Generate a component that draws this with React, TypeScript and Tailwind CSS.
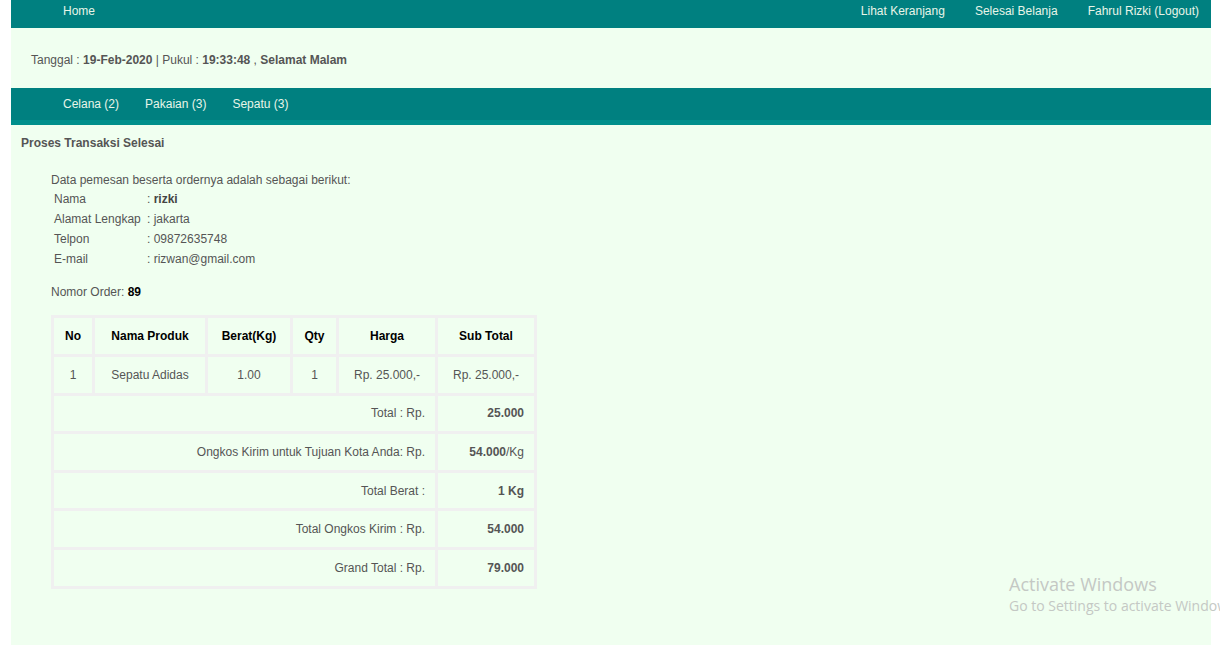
import React from "react";

const produk = [
  { no: 1, nama: "Sepatu Adidas", berat: "1.00", qty: 1, harga: "Rp. 25.000,-", sub: "Rp. 25.000,-" },
];

const ringkasan: { label: string; value: React.ReactNode }[] = [
  { label: "Total : Rp.", value: <b>25.000</b> },
  { label: "Ongkos Kirim untuk Tujuan Kota Anda: Rp.", value: <><b>54.000</b>/Kg</> },
  { label: "Total Berat :", value: <b>1 Kg</b> },
  { label: "Total Ongkos Kirim : Rp.", value: <b>54.000</b> },
  { label: "Grand Total : Rp.", value: <b>79.000</b> },
];

const pemesan = [
  { label: "Nama", value: <b className="text-[#444]">rizki</b> },
  { label: "Alamat Lengkap", value: "jakarta" },
  { label: "Telpon", value: "09872635748" },
  { label: "E-mail", value: "rizwan@gmail.com" },
];

export default function App() {
  return (
    <div className="relative w-[1220px] h-[645px] overflow-hidden bg-white font-['Liberation_Sans',Arial,sans-serif] text-[12px] text-[#555]">
      <div className="ml-[11px] w-[1200px] min-h-[645px] bg-[#f0fff0]">
        {/* top nav */}
        <div className="h-[28px] bg-[#008080] text-[#e8f5e8] flex items-start pt-[4px] leading-[14px]">
          <a className="ml-[52px]">Home</a>
          <div className="ml-auto flex gap-[30px] mr-[12px]">
            <a>Lihat Keranjang</a>
            <a>Selesai Belanja</a>
            <a>Fahrul Rizki (Logout)</a>
          </div>
        </div>

        {/* tanggal */}
        <div className="h-[60px] pl-[20px] pt-[24px] leading-[16px]">
          Tanggal : <b>19-Feb-2020</b> | Pukul : <b>19:33:48</b> , <b>Selamat Malam</b>
        </div>

        {/* kategori */}
        <div className="h-[32px] bg-[#008080] text-[#e8f5e8] flex items-center gap-[26px] pl-[52px]">
          <a>Celana (2)</a>
          <a>Pakaian (3)</a>
          <a>Sepatu (3)</a>
        </div>
        <div className="h-[5px] bg-[#008f8c]" />

        {/* konten */}
        <div className="pl-[10px] pt-[10px] leading-[16px]">
          <h2 className="font-bold text-[#555]">Proses Transaksi Selesai</h2>

          <div className="ml-[30px] mt-[21px]">
            <p>Data pemesan beserta ordernya adalah sebagai berikut:</p>
            <div className="grid grid-cols-[93px_auto] pl-[3px] pt-[1px]">
              {pemesan.map((p) => (
                <React.Fragment key={p.label}>
                  <div className="h-[20px] leading-[20px]">{p.label}</div>
                  <div className="h-[20px] leading-[20px]">: {p.value}</div>
                </React.Fragment>
              ))}
            </div>

            <p className="mt-[15px]">
              Nomor Order: <b className="text-black">89</b>
            </p>

            <table className="mt-[15px] table-fixed w-[486px] border-separate border-spacing-[3px] bg-[#f0f0f0]">
              <thead>
                <tr className="h-[36px] text-black">
                  <th className="w-[38px] bg-[#f0fff0] font-bold">No</th>
                  <th className="w-[110px] bg-[#f0fff0] font-bold">Nama Produk</th>
                  <th className="w-[82px] bg-[#f0fff0] font-bold">Berat(Kg)</th>
                  <th className="w-[43px] bg-[#f0fff0] font-bold">Qty</th>
                  <th className="w-[96px] bg-[#f0fff0] font-bold">Harga</th>
                  <th className="w-[96px] bg-[#f0fff0] font-bold">Sub Total</th>
                </tr>
              </thead>
              <tbody>
                {produk.map((r) => (
                  <tr key={r.no} className="h-[35.6px] text-center">
                    <td className="bg-[#f0fff0]">{r.no}</td>
                    <td className="bg-[#f0fff0]">{r.nama}</td>
                    <td className="bg-[#f0fff0]">{r.berat}</td>
                    <td className="bg-[#f0fff0]">{r.qty}</td>
                    <td className="bg-[#f0fff0]">{r.harga}</td>
                    <td className="bg-[#f0fff0]">{r.sub}</td>
                  </tr>
                ))}
                {ringkasan.map((r) => (
                  <tr key={r.label} className="h-[35.6px]">
                    <td colSpan={5} className="bg-[#f0fff0] text-right pr-[10px]">{r.label}</td>
                    <td className="bg-[#f0fff0] text-right pr-[10px]">{r.value}</td>
                  </tr>
                ))}
              </tbody>
            </table>
          </div>
        </div>
      </div>

      {/* watermark windows */}
      <div className="absolute left-[1009px] top-[572px] whitespace-nowrap font-['Open_Sans',sans-serif] text-[#c4c8c4] pointer-events-none">
        <div className="text-[18px] leading-[24px]">Activate Windows</div>
        <div className="text-[14px] leading-[20px]">Go to Settings to activate Windows.</div>
      </div>
    </div>
  );
}
